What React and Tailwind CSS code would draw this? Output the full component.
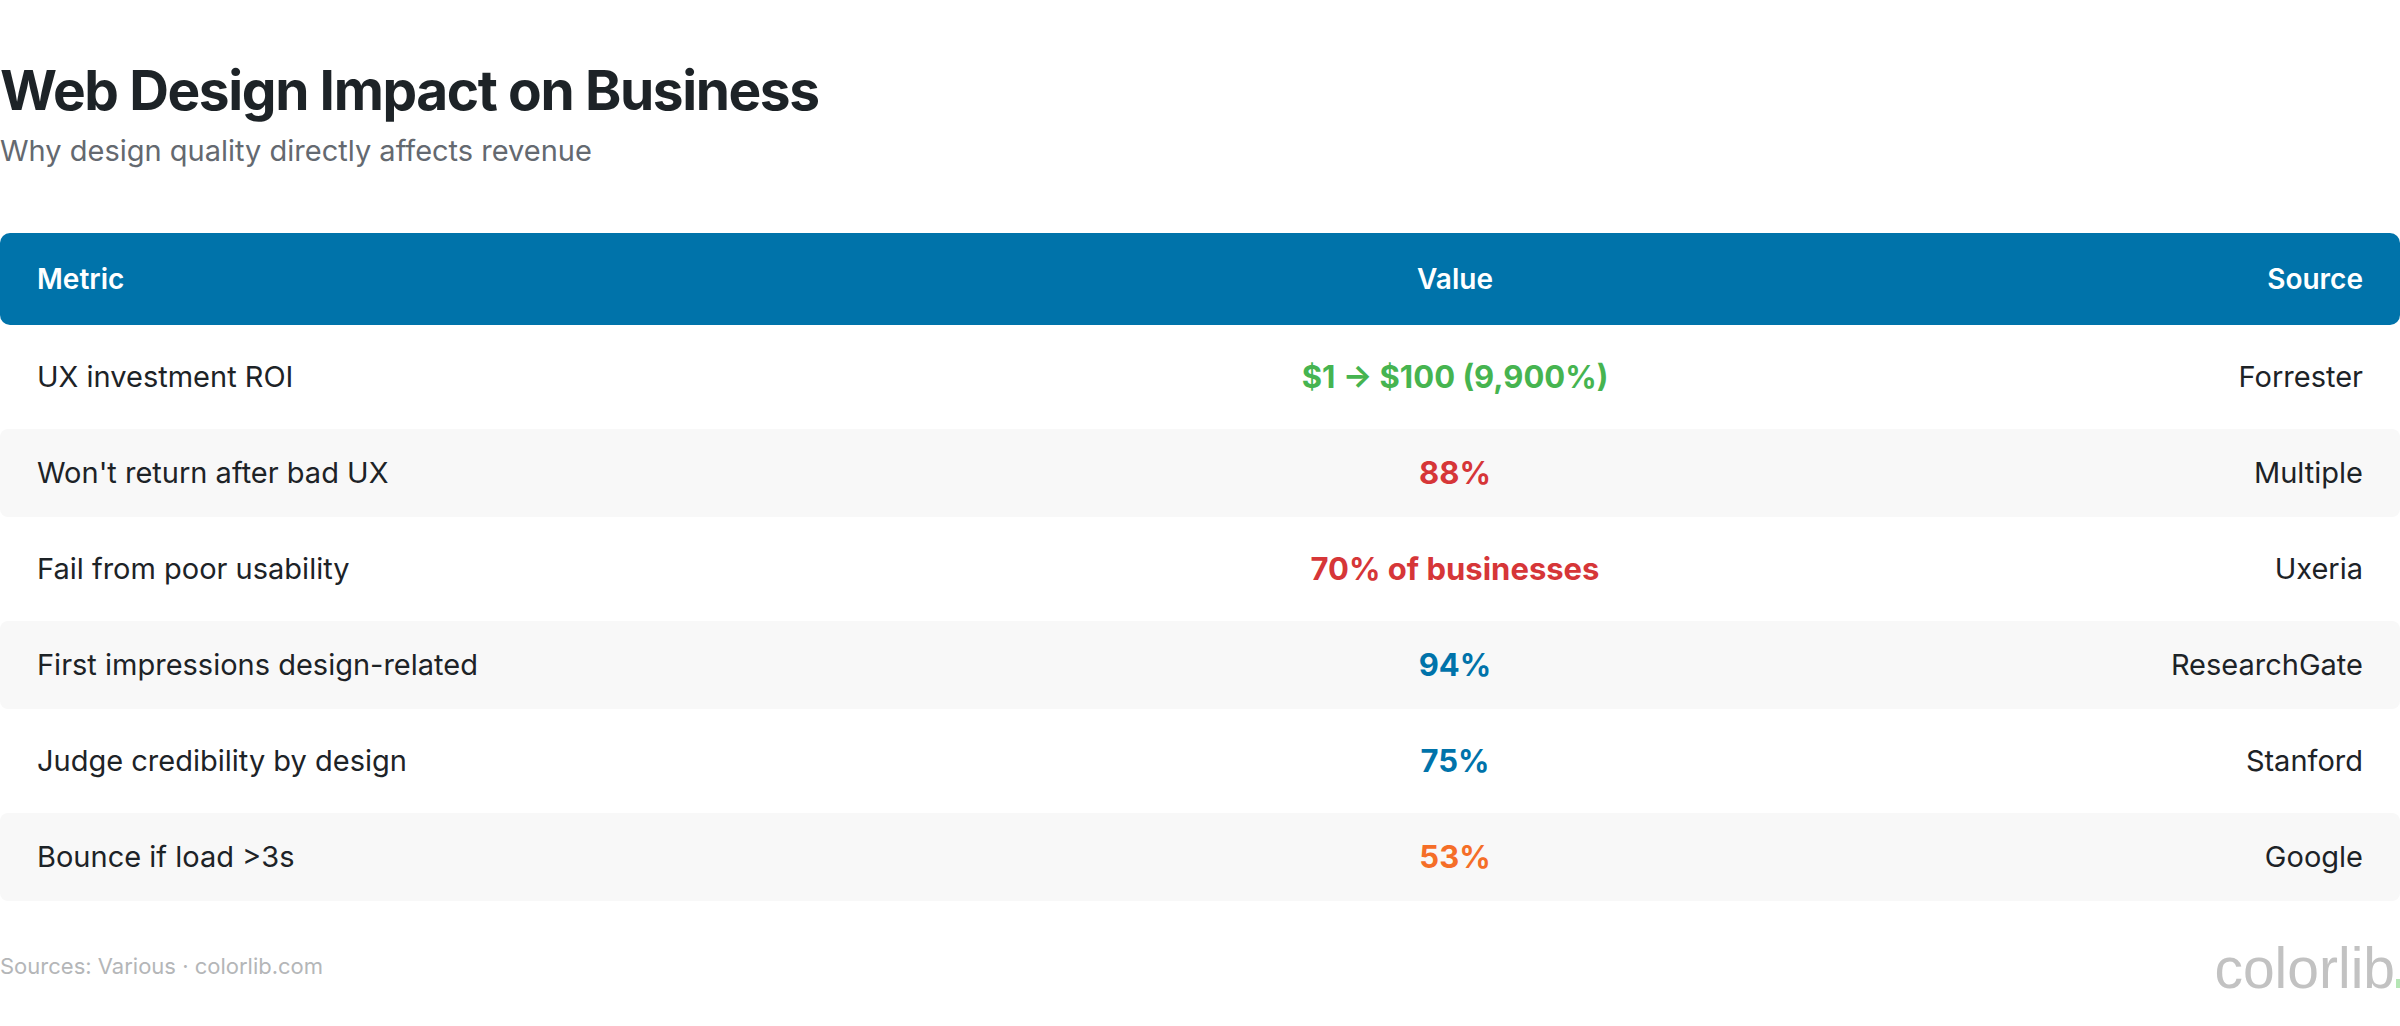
import React from 'react'

const rows = [
  { metric: 'UX investment ROI', value: '$1 → $100 (9,900%)', color: 'text-[#46b450]', source: 'Forrester' },
  { metric: "Won't return after bad UX", value: '88%', color: 'text-[#d63638]', source: 'Multiple' },
  { metric: 'Fail from poor usability', value: '70% of businesses', color: 'text-[#d63638]', source: 'Uxeria' },
  { metric: 'First impressions design-related', value: '94%', color: 'text-[#0073aa]', source: 'ResearchGate' },
  { metric: 'Judge credibility by design', value: '75%', color: 'text-[#0073aa]', source: 'Stanford' },
  { metric: 'Bounce if load >3s', value: '53%', color: 'text-[#f56e28]', source: 'Google' },
]

const App = () => {
  return (
    <div className="w-[2400px] h-[1026px] bg-white overflow-hidden font-['Inter',sans-serif] text-[#1d2327]">
      {/* Heading */}
      <h1 className="mt-[57px] text-[55px] leading-[67px] font-bold tracking-[-1.4px]">
        Web Design Impact on Business
      </h1>
      <p className="mt-[9px] text-[29px] leading-[36px] text-[#646970]">
        Why design quality directly affects revenue
      </p>

      {/* Table */}
      <div className="mt-[64px] flex flex-col gap-2">
        <div className="grid grid-cols-[1055px_726px_1fr] items-center h-[92px] px-[37px] bg-[#0073aa] rounded-[10px] text-white text-[28px] font-semibold">
          <div>Metric</div>
          <div className="text-center">Value</div>
          <div className="text-right">Source</div>
        </div>
        {rows.map((row, i) => (
          <div
            key={row.metric}
            className={`grid grid-cols-[1055px_726px_1fr] items-center h-[88px] px-[37px] rounded-[8px] text-[29px] ${i % 2 === 1 ? 'bg-[#f8f8f8]' : 'bg-white'}`}
          >
            <div>{row.metric}</div>
            <div className={`text-center text-[31px] font-bold ${row.color}`}>{row.value}</div>
            <div className="text-right">{row.source}</div>
          </div>
        ))}
      </div>

      {/* Footer */}
      <div className="mt-[39px] flex justify-between items-start">
        <p className="mt-[10px] text-[22px] leading-[33px] text-[#b4b6b8]">
          Sources: Various · colorlib.com
        </p>
        <div className="mr-[-5px] flex items-end">
          <span className="font-['Liberation_Sans',Arial,sans-serif] text-[57px] leading-[57px] text-[#c2c2c2]">colorlib</span>
          <div className="ml-[1px] mb-[9px] w-[9px] h-[9px] bg-[#b5e6b5]"></div>
        </div>
      </div>
    </div>
  )
}

export default App
